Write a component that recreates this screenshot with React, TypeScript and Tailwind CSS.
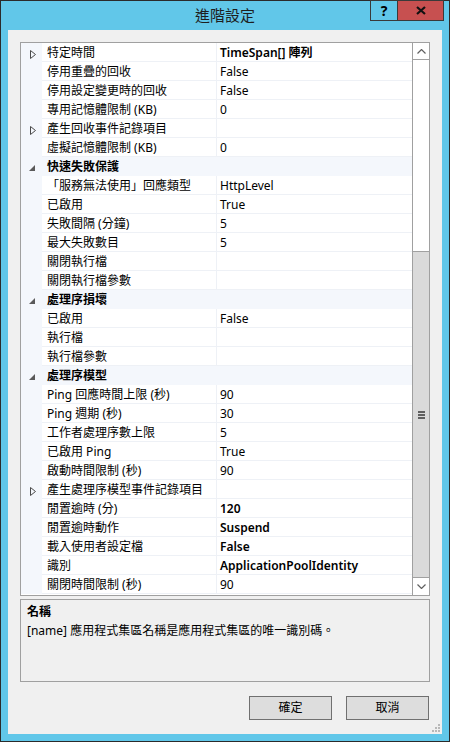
import React from 'react';

// 進階設定 — a Windows 8 style dialog with a property grid, a description pane and OK / Cancel.

type Item =
  | { kind: 'row'; name: string; value?: string; bold?: boolean; expand?: boolean }
  | { kind: 'cat'; name: string };

const items: Item[] = [
  { kind: 'row', name: '特定時間', value: 'TimeSpan[] 陣列', bold: true, expand: true },
  { kind: 'row', name: '停用重疊的回收', value: 'False' },
  { kind: 'row', name: '停用設定變更時的回收', value: 'False' },
  { kind: 'row', name: '專用記憶體限制 (KB)', value: '0' },
  { kind: 'row', name: '產生回收事件記錄項目', expand: true },
  { kind: 'row', name: '虛擬記憶體限制 (KB)', value: '0' },
  { kind: 'cat', name: '快速失敗保護' },
  { kind: 'row', name: '「服務無法使用」回應類型', value: 'HttpLevel' },
  { kind: 'row', name: '已啟用', value: 'True' },
  { kind: 'row', name: '失敗間隔 (分鐘)', value: '5' },
  { kind: 'row', name: '最大失敗數目', value: '5' },
  { kind: 'row', name: '關閉執行檔' },
  { kind: 'row', name: '關閉執行檔參數' },
  { kind: 'cat', name: '處理序損壞' },
  { kind: 'row', name: '已啟用', value: 'False' },
  { kind: 'row', name: '執行檔' },
  { kind: 'row', name: '執行檔參數' },
  { kind: 'cat', name: '處理序模型' },
  { kind: 'row', name: 'Ping 回應時間上限 (秒)', value: '90' },
  { kind: 'row', name: 'Ping 週期 (秒)', value: '30' },
  { kind: 'row', name: '工作者處理序數上限', value: '5' },
  { kind: 'row', name: '已啟用 Ping', value: 'True' },
  { kind: 'row', name: '啟動時間限制 (秒)', value: '90' },
  { kind: 'row', name: '產生處理序模型事件記錄項目', expand: true },
  { kind: 'row', name: '閒置逾時 (分)', value: '120', bold: true },
  { kind: 'row', name: '閒置逾時動作', value: 'Suspend', bold: true },
  { kind: 'row', name: '載入使用者設定檔', value: 'False', bold: true },
  { kind: 'row', name: '識別', value: 'ApplicationPoolIdentity', bold: true },
  { kind: 'row', name: '關閉時間限制 (秒)', value: '90' },
];

const font = { fontFamily: '"Noto Sans", "Noto Sans CJK TC", sans-serif' };

function Collapsed() {
  return (
    <svg width="6" height="9" viewBox="0 0 6 9" className="ml-[9px] mt-[3px]">
      <path d="M0.5 0.5 L5.5 4.5 L0.5 8.5 Z" fill="none" stroke="#4a4a4a" strokeWidth="1" />
    </svg>
  );
}

function Expanded() {
  return (
    <svg width="6" height="6" viewBox="0 0 6 6" className="ml-[8px] mt-[3px]">
      <path d="M6 0 L6 6 L0 6 Z" fill="#5a5a5a" />
    </svg>
  );
}

function Row({ item }: { item: Item }) {
  if (item.kind === 'cat') {
    return (
      <div className="flex h-[19px] shrink-0 items-center bg-[#f4f7fc]">
        <div className="flex w-[21px] items-center">
          <Expanded />
        </div>
        <div className="pl-[5px] pt-px text-[12px] font-bold leading-[18px] text-black">{item.name}</div>
      </div>
    );
  }
  return (
    <div className="flex h-[19px] shrink-0">
      <div className="flex w-[21px] items-center bg-[#f4f7fc]">{item.expand && <Collapsed />}</div>
      <div className="w-[175px] truncate border-r border-b border-[#eef1f6] pl-[5px] text-[12px] leading-[20px] text-black">
        {item.name}
      </div>
      <div
        className={`flex-1 truncate border-b border-[#eef1f6] pl-[3px] text-[12px] leading-[20px] text-black ${
          item.bold ? 'font-semibold' : ''
        }`}
      >
        {item.value}
      </div>
    </div>
  );
}

function Chevron({ up }: { up?: boolean }) {
  return (
    <svg width="9" height="5" viewBox="0 0 9 5">
      <path d={up ? 'M0.5 4.5 L4.5 0.5 L8.5 4.5' : 'M0.5 0.5 L4.5 4.5 L8.5 0.5'} fill="none" stroke="#606060" strokeWidth="1.2" />
    </svg>
  );
}

function ScrollBar() {
  return (
    <div className="flex w-[17px] flex-col border-l border-[#a0a0a0] bg-white">
      <div className="flex h-[17px] items-center justify-center border-b border-[#a0a0a0]">
        <Chevron up />
      </div>
      <div className="h-[191px]" />
      <div className="flex h-[326px] flex-col items-center justify-center gap-[1px] border-t border-[#a0a0a0] bg-[#dadada]">
        <div className="h-[2px] w-[7px] bg-[#606060]" />
        <div className="h-[2px] w-[7px] bg-[#606060]" />
        <div className="h-[2px] w-[7px] bg-[#606060]" />
      </div>
      <div className="flex flex-1 items-center justify-center border-t border-[#a0a0a0]">
        <Chevron />
      </div>
    </div>
  );
}

function Grip() {
  const dots = [
    [6, 0],
    [3, 3],
    [6, 3],
    [0, 6],
    [3, 6],
    [6, 6],
  ];
  return (
    <svg width="8" height="8" viewBox="0 0 8 8" className="absolute right-[2px] bottom-[2px]">
      {dots.map(([x, y], i) => (
        <rect key={i} x={x} y={y} width="2" height="2" fill="#b8b8b8" />
      ))}
    </svg>
  );
}

export default function App() {
  return (
    <div className="flex h-[742px] w-[450px] flex-col border border-[#2b2b2b] bg-[#61c7e9]" style={font}>
      {/* title bar */}
      <div className="relative flex h-[29px] shrink-0 items-center justify-center">
        <span className="text-[15px] leading-none text-[#1e1e1e]">進階設定</span>
        <div className="absolute -top-px right-[5px] flex h-[21px]">
          <div className="flex w-[28px] items-center justify-center border border-[#3a3a3a] text-[14px] font-bold text-black">
            ?
          </div>
          <div className="-ml-px flex w-[47px] items-center justify-center border border-[#3a3a3a] bg-[#c75050]">
            <svg width="10" height="9" viewBox="0 0 10 9">
              <path d="M1 1 L9 8 M9 1 L1 8" stroke="#111" strokeWidth="2.2" />
            </svg>
          </div>
        </div>
      </div>

      {/* client area */}
      <div className="relative mx-[7px] mb-[7px] flex flex-1 flex-col bg-[#f0f0f0] px-[12px] pt-[12px]">
        <div className="flex h-[554px] border border-[#a0a0a0] bg-white">
          <div className="flex flex-1 flex-col overflow-hidden">
            {items.map((it, i) => (
              <Row key={i} item={it} />
            ))}
          </div>
          <ScrollBar />
        </div>

        <div className="mt-[3px] h-[83px] border border-[#a0a0a0] px-[6px] pt-[3px]">
          <div className="text-[12px] font-bold leading-[18px] text-black">名稱</div>
          <div className="text-[12px] leading-[19px] text-black">[name] 應用程式集區名稱是應用程式集區的唯一識別碼。</div>
        </div>

        <div className="mt-[14px] mr-px flex justify-end gap-[14px]">
          <button className="h-[24px] w-[83px] border border-[#707070] bg-[#dddddd] text-[12px] text-black">確定</button>
          <button className="h-[24px] w-[83px] border border-[#707070] bg-[#dddddd] text-[12px] text-black">取消</button>
        </div>
        <Grip />
      </div>
    </div>
  );
}
